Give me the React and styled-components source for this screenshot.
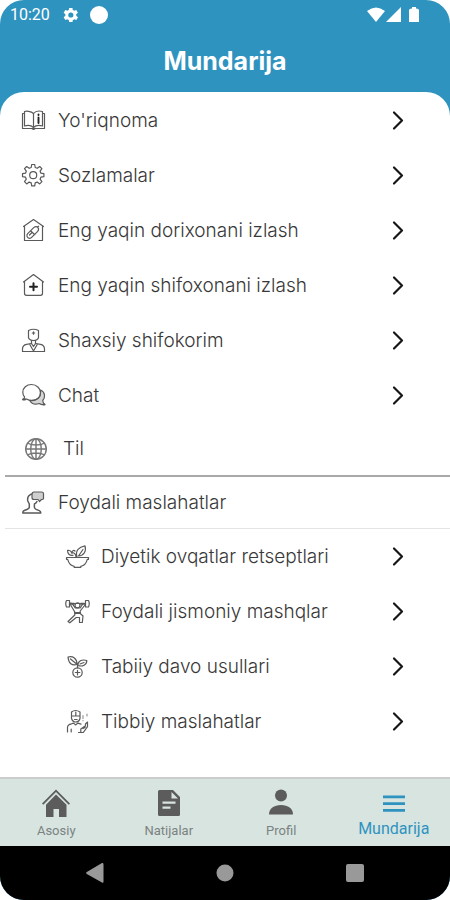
import React from "react";
import styled, { createGlobalStyle } from "styled-components";

const GlobalStyle = createGlobalStyle`
  *, *::before, *::after { box-sizing: border-box; }
  body { margin: 0; background: #fff; }
  button { border: 0; padding: 0; background: none; font: inherit; color: inherit; cursor: pointer; }
`;

const Screen = styled.div`
  display: flex;
  flex-direction: column;
  min-height: 100vh;
  border-radius: 24px;
  overflow: hidden;
  background: #2f93bf;
  font-family: Inter, "Noto Sans", sans-serif;
`;

const StatusBar = styled.div`
  display: flex;
  align-items: center;
  justify-content: space-between;
  height: 30px;
  padding: 0 30px 0 10px;
  color: #fff;
  font: 400 16px/20px Roboto, sans-serif;
`;

const StatusGroup = styled.div`
  display: flex;
  align-items: center;
  gap: ${(p) => p.$gap}px;
`;

const Header = styled.header`
  display: flex;
  align-items: center;
  justify-content: center;
  height: 62px;
`;

const Title = styled.h1`
  margin: 0;
  color: #fff;
  font-size: 25px;
  line-height: 30px;
  font-weight: 700;
`;

const Panel = styled.main`
  flex: 1;
  padding-top: 1px;
  border-radius: 24px 24px 0 0;
  background: #fff;
`;

const MenuList = styled.ul`
  margin: 0;
  padding: 0;
  list-style: none;
`;

const MenuButton = styled.button`
  display: flex;
  align-items: center;
  width: 100%;
  height: 55px;
  padding: 0 45px 0 ${(p) => (p.$nested ? 65 : 21)}px;
  gap: ${(p) => (p.$nested ? 11 : 12)}px;
  text-align: left;
  color: #383838;
  font-size: 19px;
  line-height: 24px;
  font-weight: 300;
  white-space: nowrap;
`;

const Label = styled.span`
  flex: 1;
`;

const LanguageButton = styled(MenuButton)`
  height: 52px;
  padding-left: 24px;
  gap: 15px;
`;

const Section = styled.section`
  margin-left: 5px;
  border-top: 2px solid #a9a9a9;
`;

const SectionTitle = styled.h2`
  display: flex;
  align-items: center;
  gap: 12px;
  height: 52px;
  margin: 0;
  padding-left: 16px;
  border-bottom: 1px solid #e4e4e4;
  color: #383838;
  font-size: 19px;
  line-height: 24px;
  font-weight: 300;
`;

const NestedList = styled(MenuList)`
  margin-left: -5px;
`;

const TabBar = styled.nav`
  display: grid;
  grid-template-columns: repeat(4, 1fr);
  height: 69px;
  border-top: 2px solid #cbcdcc;
  background: #d7e4e0;
`;

const Tab = styled.a`
  display: flex;
  flex-direction: column;
  align-items: center;
  padding-top: 9px;
  gap: ${(p) => (p.$active ? 2 : 4)}px;
  color: ${(p) => (p.$active ? "#2f93bf" : "#7b8280")};
  font: 400 ${(p) => (p.$active ? 16 : 13)}px/18px Roboto, sans-serif;
  text-decoration: none;
`;

const SystemBar = styled.div`
  display: grid;
  grid-template-columns: repeat(3, 1fr);
  height: 54px;
  padding: 0 30px;
  background: #000;
`;

const SystemButton = styled.button`
  display: flex;
  align-items: center;
  justify-content: center;
`;

const LineSvg = styled.svg`
  flex: none;
  fill: none;
  stroke: ${(p) => p.$color || "#5a5a5a"};
  stroke-width: ${(p) => p.$weight || 1.2};
  stroke-linecap: round;
  stroke-linejoin: round;
`;

const SolidSvg = styled.svg`
  flex: none;
  fill: ${(p) => p.$color || "currentColor"};
`;

const drawings = {
  guide: (
    <>
      <path d="M12.500 5.500C10 3 5 3 3.500 3.500V18c3-.8 7-.5 9 1.500 2-2 6-2.300 9-1.500V3.500c-3-.8-7-.5-9 2Z" />
      <path d="M12.500 5.500v14M3.500 5.500H1.500v15h22v-15h-2M1.500 20.500h9l2 1 2-1" />
      <path d="M17.500 9.500V15M17.500 6.500v.6" strokeWidth="1.900" stroke="#222" />
    </>
  ),
  settings: (
    <>
      <path d="M10.700 1.500h3l.5 3 2 .8 2.500-1.800 2.200 2.200-1.800 2.500.8 2 3 .5v3l-3 .5-.8 2 1.800 2.500-2.200 2.200-2.500-1.800-2 .8-.5 3h-3l-.5-3-2-.8-2.500 1.800-2.200-2.200 1.800-2.500-.8-2-3-.5v-3l3-.5.8-2-1.800-2.500 2.200-2.200 2.500 1.800 2-.8Z" />
      <circle cx="12.200" cy="12.200" r="3.500" />
    </>
  ),
  pharmacy: (
    <>
      <path d="M2.500 8.500 12.500 1.500l10 7M3.500 8v14.500h18V8" />
      <path d="M8.200 20.300c-2.300-.6-3-3-1.500-4.700l6-6c3.200-2.500 6.300.8 4 3.800l-5.800 5.800c-.8.900-1.700 1.200-2.700 1.100ZM9.600 12.700l4.200 4M8.500 17l2.500-2.500M16.300 9l1.300-.8" />
    </>
  ),
  hospital: (
    <>
      <path d="M2.500 9 12.500 1.500l10 7.500M3.500 8.300v12q0 2 2 2h14q2 0 2-2v-12" />
      <path d="M12.500 10.300v7M9 13.800h7" strokeWidth="2" stroke="#222" />
    </>
  ),
  doctor: (
    <>
      <path d="M7.500 2.500q5-2.500 10 0v7.300q-1 2.700-5 2.700t-5-2.700ZM12.500 3.800v2.400M11.300 5h2.400M10.500 12.500v3M14.500 12.500v3" />
      <path d="M1.500 23.500v-2.800q.2-3.700 4-4.400l5-.8 2 3 2-3 5 .8q3.800.7 4 4.400v2.800ZM8.500 16l4 7 4-7" />
    </>
  ),
  chat: (
    <>
      <path d="M19.500 7c5 2.200 5 7.400 2.200 10.500.2 2 1 3 2 4-2 .3-4 0-5.500-1-3.500 1.300-7.500.5-9.500-3 4.500.8 11-1.800 10.800-7.500Z" fill="#d5d5d5" />
      <path d="M2.200 16.200H6q2 1.300 5 1.200c5-.2 8.500-3.300 8.500-7.700S15.500 1.500 10.500 1.500 1.800 5 1.800 9.300q0 2.700 1.800 4.700-.2 1.200-1.400 2.200Z" />
      <path d="M2 16.400h2M22.500 21.500h1" strokeWidth="2" />
    </>
  ),
  globe: (
    <>
      <circle cx="12.500" cy="12.500" r="10.700" />
      <ellipse cx="12.500" cy="12.500" rx="5.500" ry="10.700" />
      <path d="M12.500 2v21M2 12.500h21M4 6.500c4 2.500 13 2.500 17 0M4 18.500c4-2.500 13-2.500 17 0" />
    </>
  ),
  advice: (
    <>
      <path d="M12.500 3.800C8 4 6 7 6.800 11l1.500 3v3.500q-.5 1.500-5 3-1.600.6-1.500 2.500h18q0-1.800-1.500-2.400-4.700-1.600-4.900-3.100v-3.500q1.800-.6 2.500-2.500" strokeWidth="1.500" />
      <path d="M13 2h7.500q2 0 2 1.500v5q0 1-2 1l-2 2-1.500-2h-4q-2 0-2-2V4.500Q11 2 13 2Z" fill="#cfcfcf" />
    </>
  ),
  salad: (
    <>
      <path d="M1.500 13.500h22v1.800h-1.200q-1.500 6-6.500 7v1H9.200v-1q-5-1-6.500-7H1.500Z" />
      <path d="M12 13C10 6.500 14 3 20 1.800c1.500 5.500-1 9.700-6.500 10.200L18 5.500M11 13c-.2-3-2-4.500-4.500-4.500M7 9C5.500 6 2.500 6.300 2.500 6.300c0 3.500 2 5.500 5.500 5M7 9.500c-.5-3 2-3.500 3-2.500" />
    </>
  ),
  exercise: (
    <>
      <path d="M4.500 4.500h16M1.500 1.500Q0 4.500 1.500 8h3V1.500ZM20.500 1.500V8h3q1.500-3.500 0-6.500Z" />
      <circle cx="12.500" cy="6.300" r="2.500" />
      <path d="M4.500 4 8 10l1.800 3v3L3 22.500l1.800 1.300 6.400-5.300h3.300v5h2.800L18 17l-2.800-2.500V12L20 6V4.500h-2L15.200 9l-5-.2L7 4.300Z" />
      <path d="M6 4.700h3M16 4.700h3M10 14h5" strokeWidth="2" />
    </>
  ),
  herbal: (
    <>
      <circle cx="12.500" cy="18.500" r="4.700" />
      <path d="M12.500 14V10M12.500 16.300v4.500M10.300 18.500h4.500" />
      <path d="M12 10.500c-5 1.300-8.500-1-9-7.500 5-1.300 9 1.500 9 7.500ZM5.500 5l5.500 4.500M12.800 11.500c0-4.500 4-6.500 9-5 0 4.500-4.200 6.500-9 5ZM15 10l4-1.500" />
    </>
  ),
  medical: (
    <>
      <path d="M6.500 3q4-3 8.500 0v6.500Q14 13 10.800 13T6.500 9.500ZM6.500 7H15M10.800 3v3.500M9.500 10.500h2.600" />
      <path d="M2.500 23v-4.500q0-3 4-3.700l2-.7 2 1.800 2.500-1.800 3 1M6.200 20v3M15.800 23v-3l4.700-3.200M13.500 23.500h4.800l4.200-5.800V13l-2 2-.5 3.500-2 1" />
      <path d="M18 6.500v3M18 11.500v.2M22 5v2" stroke="#999" />
    </>
  ),
};

function MenuIcon({ name, size = 25, ...rest }) {
  return (
    <LineSvg width={size} height={size} viewBox="0 0 25 25" aria-hidden="true" {...rest}>
      {drawings[name]}
    </LineSvg>
  );
}

function Chevron() {
  return (
    <LineSvg width="14" height="22" viewBox="0 0 14 22" $color="#161616" $weight="2.200" aria-hidden="true">
      <path d="m3 2.500 8 8-8 8" />
    </LineSvg>
  );
}

const mainItems = [
  ["guide", "Yo'riqnoma"],
  ["settings", "Sozlamalar"],
  ["pharmacy", "Eng yaqin dorixonani izlash"],
  ["hospital", "Eng yaqin shifoxonani izlash"],
  ["doctor", "Shaxsiy shifokorim"],
  ["chat", "Chat"],
];

const adviceItems = [
  ["salad", "Diyetik ovqatlar retseptlari"],
  ["exercise", "Foydali jismoniy mashqlar"],
  ["herbal", "Tabiiy davo usullari"],
  ["medical", "Tibbiy maslahatlar"],
];

function MenuItem({ icon, label, nested }) {
  return (
    <li>
      <MenuButton type="button" $nested={nested}>
        <MenuIcon name={icon} />
        <Label>{label}</Label>
        <Chevron />
      </MenuButton>
    </li>
  );
}

const tabs = [
  {
    label: "Asosiy",
    icon: <path d="m1 15.500 14-14 14 14-1.300 1.200L15 4 2.300 16.700ZM15 6.500l10.500 10.300V29H18v-8h-5.500v8H5V16.800Z" />,
  },
  {
    label: "Natijalar",
    icon: <path fillRule="evenodd" d="M4 3.500q0-1.500 1.500-1.500H19l7 7v17.500q0 1.500-1.500 1.500h-19Q4 28 4 26.500ZM17.500 4v6.500H24ZM8.500 13.500v2.200h13v-2.200ZM8.500 18.500v2.200h8v-2.200Z" />,
  },
  {
    label: "Profil",
    icon: (
      <>
        <circle cx="15" cy="7.500" r="6" />
        <path d="M3 26.500c0-6 5-9.500 12-9.500s12 3.500 12 9.500Z" />
      </>
    ),
  },
  {
    label: "Mundarija",
    active: true,
    icon: <path d="M4 7.500h22v2.800H4ZM4 14.200h22V17H4ZM4 20.900h22v2.800H4Z" />,
  },
];

export default function App() {
  return (
    <>
      <GlobalStyle />
      <Screen>
        <StatusBar>
          <StatusGroup $gap={10}>
            <span>10:20</span>
            <SolidSvg width="20" height="20" viewBox="0 0 24 24" aria-hidden="true">
              <path fillRule="evenodd" d="m19.400 13 .1-1-.1-1 2.100-1.600-2-3.500-2.500 1a7 7 0 0 0-1.700-1L15 3.500h-4l-.4 2.400a7 7 0 0 0-1.700 1l-2.500-1-2 3.500L6.500 11l-.1 1 .1 1-2.100 1.600 2 3.500 2.500-1q.8.6 1.700 1l.4 2.400h4l.4-2.400q.9-.4 1.700-1l2.500 1 2-3.500ZM13 8.900a3.100 3.100 0 1 0 0 6.200 3.100 3.100 0 0 0 0-6.200Z" />
            </SolidSvg>
            <SolidSvg width="18" height="18" viewBox="0 0 18 18" aria-hidden="true">
              <circle cx="9" cy="9" r="9" />
            </SolidSvg>
          </StatusGroup>
          <StatusGroup $gap={1}>
            <SolidSvg width="18" height="16" viewBox="0 0 18 16" aria-hidden="true">
              <path d="M0 4Q9-3 18 4L9 15Z" />
            </SolidSvg>
            <SolidSvg width="15" height="16" viewBox="0 0 15 16" aria-hidden="true">
              <path d="M15 0v15H0Z" />
            </SolidSvg>
            <SolidSvg width="18" height="16" viewBox="0 0 18 16" aria-hidden="true">
              <path d="M10 0h4v1.500q3 0 3 2V15H7V3.500q0-2 3-2Z" />
            </SolidSvg>
          </StatusGroup>
        </StatusBar>
        <Header>
          <Title>Mundarija</Title>
        </Header>
        <Panel>
          <MenuList>
            {mainItems.map(([icon, label]) => (
              <MenuItem key={icon} icon={icon} label={label} />
            ))}
          </MenuList>
          <LanguageButton type="button">
            <MenuIcon name="globe" size={24} $color="#777" $weight="1.500" />
            <Label>Til</Label>
          </LanguageButton>
          <Section>
            <SectionTitle>
              <MenuIcon name="advice" />
              Foydali maslahatlar
            </SectionTitle>
            <NestedList>
              {adviceItems.map(([icon, label]) => (
                <MenuItem key={icon} icon={icon} label={label} nested />
              ))}
            </NestedList>
          </Section>
        </Panel>
        <TabBar>
          {tabs.map((tab) => (
            <Tab key={tab.label} href="#" $active={tab.active} aria-current={tab.active ? "page" : undefined}>
              <SolidSvg width="30" height="30" viewBox="0 0 30 30" $color={tab.active ? "#2f93bf" : "#5c5c5c"} aria-hidden="true">
                {tab.icon}
              </SolidSvg>
              {tab.label}
            </Tab>
          ))}
        </TabBar>
        <SystemBar>
          <SystemButton type="button" aria-label="Back">
            <SolidSvg width="20" height="20" viewBox="0 0 20 20" $color="#999">
              <path d="M17 0q1.500-.3 1.500 1.500v17q0 1.800-1.500 1L1.800 11q-1.300-1 0-2Z" />
            </SolidSvg>
          </SystemButton>
          <SystemButton type="button" aria-label="Home">
            <SolidSvg width="18" height="18" viewBox="0 0 18 18" $color="#999">
              <circle cx="9" cy="9" r="8.500" />
            </SolidSvg>
          </SystemButton>
          <SystemButton type="button" aria-label="Recent apps">
            <SolidSvg width="18" height="18" viewBox="0 0 18 18" $color="#999">
              <rect width="18" height="18" rx="2" />
            </SolidSvg>
          </SystemButton>
        </SystemBar>
      </Screen>
    </>
  );
}
